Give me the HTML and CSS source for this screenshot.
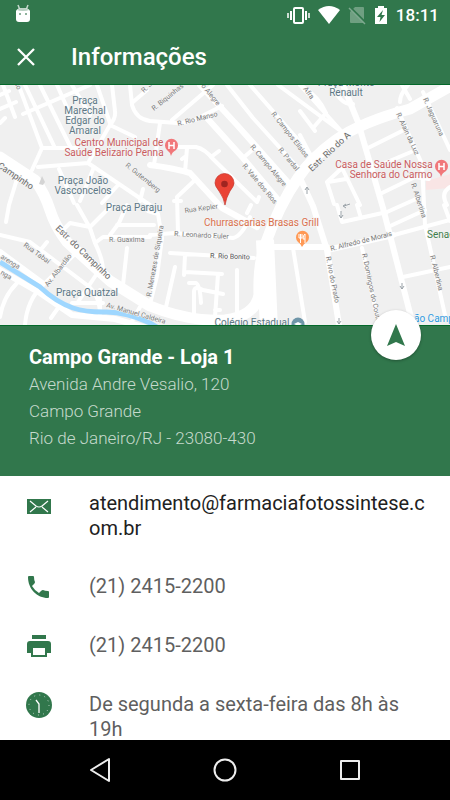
FILE: index.html
```html
<!DOCTYPE html>
<html lang="pt-BR">
  <head>
    <meta charset="UTF-8" />
    <meta name="viewport" content="width=device-width, initial-scale=1" />
    <title>Informações</title>
    <link rel="stylesheet" href="styles.css">
  </head>
  <body>
    <!-- Status bar -->
    <div class="status-bar">
      <svg class="status-robot" width="16" height="18" viewBox="0 0 16 18">
        <path d="M3 1l2 5M13 1l-2 5" stroke="#c5d8cc" stroke-width="1.5" />
        <path d="M1 7q1-3 7-3t7 3v8q0 3-3 3H4q-3 0-3-3z" fill="#fff" />
        <path d="M2 6q2-2 6-2t6 2q-2 1-6 1T2 6z" fill="#b9d0c2" />
        <path d="M4 9h2v2H4zM10 9h2v2h-2z" fill="#8fb39d" />
      </svg>
      <div class="status-icons">
        <svg width="24" height="20" viewBox="0 0 24 20" fill="none" stroke="#fff">
          <rect x="8" y="3" width="9" height="15" rx="1" stroke-width="2" />
          <path d="M5 6v9M20 6v9" stroke-width="2" />
          <path d="M2 8v5M23 8v5" stroke-width="1.5" />
        </svg>
        <svg width="22" height="20" viewBox="0 0 22 20">
          <path d="M0 5Q11-3 22 5L11 19z" fill="#fff" />
        </svg>
        <svg width="18" height="20" viewBox="0 0 18 20">
          <path d="M2 7l5-5h8q1 0 1 1v14q0 1-1 1H3q-1 0-1-1z" fill="#6f9f81" />
          <path d="M2 2l16 16" stroke="#31774c" stroke-width="2" />
          <path d="M1 3l16 16" stroke="#7fa98f" stroke-width="1.5" />
        </svg>
        <svg width="14" height="20" viewBox="0 0 14 20">
          <path d="M4 1h6v2h3v16H1V3h3z" fill="#fff" />
          <path d="M9 5l-6 7h3.5l-1 5L11 10H7.500z" fill="#31774c" />
        </svg>
        <span class="clock">18:11</span>
      </div>
    </div>

    <header class="toolbar">
      <button class="close" aria-label="Fechar">
        <svg width="18" height="18" viewBox="0 0 18 18">
          <path d="M1 1l16 16M17 1L1 17" stroke="#fff" stroke-width="2.3" />
        </svg>
      </button>
      <h1>Informações</h1>
    </header>

    <!-- Map -->
    <svg class="map" viewBox="0 0 450 240" preserveAspectRatio="xMidYMid slice" role="img" aria-label="Mapa da loja">
      <rect width="450" height="240" fill="#f0f0f0" />
      <path d="M426 96l24-7v14l-24 2z" fill="#f9e5e5" />

      <g class="roads">
        <path d="M23 29L90 0M3 0l12 32M0 24l16-7M0 10l9-4M0 38l5-5M20 4l22 59M25 0l30 63M40 0l31 63M57 0l15 34M72 0l18 30" />
        <path d="M42 63h35M42 63L32 85M38 82l50-4 62 42M88 78l22-38q6-7 5-14L112 0M97 0l13 38M110 40l25 12M130 0l2 20q4 14 18 16l27 2q17 0 27-8l18-9M133 17l14-12" />
        <path d="M59 84l15 34M102 118l16-18M140 116l3-12M80 116l14-34M17 94l-8 26-3 17" />
        <path d="M172 35L213 0M227 0l26 33 47 52M250 0l50 57 14 17M278 0l64 47M300 0l42 47M243 73l14-12M160 38l-6 42M187 63l-2 24M182 74l4-3" />
        <path d="M175 62h21q9 2 17 12l44 43 2-5M211 72l8-6M195 95l-18 17 1 35M174 116h7" />
        <path d="M313 43l13-15M300 26l15 20M300 50l12 23M300 0q18 10 26 28M353 19q-12 2-21-19M400 17q0-8 8-17M410 14l-8-14" />
        <path d="M397 23l25 56 3 61 20 90M423 7l27 58M368 63l36-18M373 83l38-16M382 108l33-16 14 2M360 37l8 0M327 97l15-14 18 37M327 97l7 22M328 97l18-3M450 102q-10 6-3 18" />
        <path d="M337 120l5 17 45-10 29-13M357 120l4 13M362 163l16 72M403 192l47-10M388 142l37-17M394 150l56-15M444 120l6 16" />
        <path d="M0 150l30 7 57 43q13 10 13 30M47 157l-8 10M77 167L43 200q-16 15-18 40M17 198Q3 212 0 232M96 190l-18 27M64 144l6-6 20 4 22-22M77 120l13 23 5 15q8 16 8 28M95 158l8-6h47M110 150l9-12 8-18M117 140h37M127 163l-4 37M72 218h31M58 223l-7 10M100 205v25M140 222l-9 16" />
        <path d="M150 150l24-2 59 5q9-2 17-21M148 126l10 3 4 24-5 38-6 24M170 168l84 5M185 170l-1 20M185 187l37 2M218 189l-3 43M175 182l-9 40M189 198h7q4 2 5 20M194 235V207q0-7 9-2l20 4M237 185v46M247 128l4-8M293 163l12 74M215 225h5" />
      </g>
      <g class="roads roads-wide">
        <path d="M0 167l42 31M0 185l40 23 32 22 43 4 35 10" />
        <path d="M207 33l36 40 37 44M200 0l37 40 56 63M150 80q23 3 40 8l32 35 35 19" />
        <path d="M343 0l15 37 25 86 30 117M300 93l13 28 14 44 12 75M327 165l66-15M263 162h64" />
      </g>
      <path class="river" d="M0 177l40 25q16 15 33 21 12 4 30 4 22-1 47 11l10 6" />
      <g class="roads roads-main">
        <path d="M0 72l35 23q10 14 15 30t17 32l43 39 40 25q40 16 75 14 30-4 34-25-1-30 6-50 14-40 33-67 13-20 38-38 25-18 74-31l55-31" />
      </g>
      <path class="avenue" d="M265 155l4 90" />
      <path d="M39 99l3-8 3 6-2 3z" fill="#d4d4d4" />

      <g class="street">
        <text transform="translate(154 26) rotate(-39)">R. Biquinhas</text>
        <text transform="translate(178 41) rotate(-14)">R. Rio Manso</text>
        <text transform="translate(201 1) rotate(51)">o Alegre</text>
        <text transform="translate(271 29) rotate(52)">R. Campos Elísios</text>
        <text transform="translate(278 65) rotate(50)">R. Pardal</text>
        <text transform="translate(250 62) rotate(50)">R. Campo Alegre</text>
        <text transform="translate(242 81) rotate(50)">R. Vale dos Rios</text>
        <text transform="translate(125 81) rotate(39)">R. Gutemberg</text>
        <text transform="translate(185 128) rotate(-8)">Rua Kepler</text>
        <text x="109" y="157">R. Guaxima</text>
        <text transform="translate(174 151) rotate(3)">R. Leonardo Euler</text>
        <text class="dark" transform="translate(210 173) rotate(2)">R. Rio Bonito</text>
        <text transform="translate(23 161) rotate(36)">Rua Tabaí</text>
        <text transform="translate(48 202) rotate(-52)">Av. Albardão</text>
        <text transform="translate(151 212) rotate(-80)">R. Menezes de Siqueira</text>
        <text transform="translate(106 222) rotate(16)">Av. Manuel Caldeira</text>
        <text transform="translate(0 173) rotate(32)">arenga</text>
        <text transform="translate(0 189) rotate(30)">nga</text>
        <text transform="translate(331 166) rotate(-14)">R. Alfredo de Morais</text>
        <text transform="translate(326 172) rotate(79)">R. Ivo do Prado</text>
        <text transform="translate(362 169) rotate(78)">R. Domingos do Couto</text>
        <text transform="translate(430 171) rotate(76)">R. Albertina</text>
        <text transform="translate(411 99) rotate(72)">R. Albertina</text>
        <text transform="translate(396 29) rotate(65)">R. Alain da Luz</text>
        <text transform="translate(423 14) rotate(66)">R. Jaguaruna</text>
        <text transform="translate(144 8) rotate(-45)">R. S</text>
        <text transform="translate(303 4) rotate(53)">Afra</text>
        <text transform="translate(15 0) rotate(65)">lo</text>
      </g>
      <g class="road-name">
        <text transform="translate(-3 82) rotate(34)">Campinho</text>
        <text transform="translate(55 144) rotate(44)">Estr. do Campinho</text>
        <text transform="translate(312 87) rotate(-43)">Estr. Rio do A</text>
      </g>
      <g class="place">
        <text x="85" y="19">Praça</text>
        <text x="85" y="29">Marechal</text>
        <text x="85" y="39">Edgar do</text>
        <text x="85" y="49">Amaral</text>
        <text x="83" y="99">Praça João</text>
        <text x="83" y="109">Vasconcelos</text>
        <text x="134" y="126">Praça Paraju</text>
        <text x="87" y="211">Praça Quatzal</text>
        <text x="346" y="1">Praça Monte</text>
        <text x="346" y="11">Renault</text>
        <text x="252" y="241">Colégio Estadual</text>
      </g>
      <g class="place health">
        <text x="119" y="61">Centro Municipal de</text>
        <text x="114" y="71">Saúde Belizario Penna</text>
        <text x="384" y="83">Casa de Saúde Nossa</text>
        <text x="391" y="93">Senhora do Carmo</text>
      </g>
      <text class="food" x="204" y="141">Churrascarias Brasas Grill</text>
      <text class="school" x="427" y="153">Senac</text>
      <text class="station" x="414" y="237">ão Campo</text>

      <!-- Points of interest -->
      <g id="hospital">
        <path d="M171 71q-1-4-4-6a6.500 6.500 0 1 1 9 0q-4 2-5 6z" fill="#f1777a" />
        <path d="M169 57v7M174 57v7M169 60.500h5" stroke="#fff" stroke-width="1.500" />
      </g>
      <use href="#hospital" x="270" y="21" />
      <path d="M302 162q-1-3-4-5a6.500 6.500 0 1 1 9 0q-4 2-5 5z" fill="#ff9955" />
      <path d="M299 149v4h3v-4M300.500 149v9M305 158v-9q-2 1-2 5h2" fill="none" stroke="#fff" />
      <circle cx="298" cy="239" r="6.500" fill="#6e95a8" />
      <path d="M294 239l4-2 4 2-4 2z" fill="#fff" />
      <g fill="none" stroke="#9aa2a8">
        <path d="M307 109v-6M305 105l2-3 2 3M341 126v7M339 130l2 3 2-3M402 198v6M400 201l2 3 2-3M339 233v6M337 236l2 3 2-3M350 119l-6 2M346 119l-3 2 3 2" />
      </g>

      <!-- Store marker -->
      <path d="M225 120q-1-7-6-14-4-5-4-8a9.500 9.500 0 0 1 19 0q0 3-4 8-4 7-5 14z" fill="#ea4335" stroke="#c5352b" stroke-width=".7" />
      <circle cx="224.500" cy="99" r="3.300" fill="#a02520" />
    </svg>

    <section class="store">
      <button class="directions" aria-label="Como chegar">
        <svg width="20" height="24" viewBox="0 0 20 24">
          <path d="M10 1l9 22-9-4-9 4z" fill="#31774c" />
        </svg>
      </button>
      <h2>Campo Grande - Loja 1</h2>
      <address>
        Avenida Andre Vesalio, 120<br>
        Campo Grande<br>
        Rio de Janeiro/RJ - 23080-430
      </address>
    </section>

    <ul class="contacts">
      <li>
        <svg width="26" height="26" viewBox="0 0 26 26">
          <rect x="1" y="8" width="24" height="15" fill="#31774c" />
          <path d="M4 10l6 5q3 2 6 0l6-5M4 21l6-5M22 21l-6-5" fill="none" stroke="#fff" stroke-width="1.2" />
        </svg>
        <a class="email" href="mailto:atendimento@farmaciafotossintese.com.br">atendimento@farmaciafotossintese.com.br</a>
      </li>
      <li>
        <svg width="26" height="26" viewBox="0 0 26 26">
          <path d="M3 2h4q1 0 1 1 0 3 1 5 0 1-1 2l-2 2q3 5 7 7l2-2q1-1 2-1 2 1 5 1 1 0 1 1v5q0 1-1 1C11 24 2 15 2 3q0-1 1-1z" fill="#31774c" />
        </svg>
        <a href="tel:+552124152200">(21) 2415-2200</a>
      </li>
      <li>
        <svg width="26" height="26" viewBox="0 0 26 26">
          <path d="M6 2h14v4H6zM4 8h18q3 0 3 3v9h-4v4H5v-4H1v-9q0-3 3-3z" fill="#31774c" />
          <path d="M7 15h12v7H7z" fill="#fff" />
        </svg>
        <a href="tel:+552124152200">(21) 2415-2200</a>
      </li>
      <li>
        <svg width="26" height="26" viewBox="0 0 26 26">
          <circle cx="13" cy="13" r="13" fill="#31774c" />
          <circle cx="13" cy="13" r="10" fill="none" stroke="#c5d8cc" stroke-dasharray="1 4.236" />
          <path d="M10 8l3 4v9" fill="none" stroke="#fff" stroke-width="1.3" />
        </svg>
        <span>De segunda a sexta-feira das 8h às 19h</span>
      </li>
    </ul>

    <!-- System navigation -->
    <nav class="nav-bar">
      <button aria-label="Voltar">
        <svg width="24" height="26" viewBox="0 0 24 26"><path d="M21 2v22L3 13z" /></svg>
      </button>
      <button aria-label="Início">
        <svg width="24" height="26" viewBox="0 0 24 26"><circle cx="12" cy="13" r="10.500" /></svg>
      </button>
      <button aria-label="Recentes">
        <svg width="24" height="26" viewBox="0 0 24 26"><rect x="3" y="4" width="18" height="18" /></svg>
      </button>
    </nav>
  </body>
</html>
```

FILE: styles.css
```css
* {
  box-sizing: border-box;
}
body {
  margin: 0;
  height: 100vh;
  display: flex;
  flex-direction: column;
  font-family: Roboto, "Liberation Sans", sans-serif;
  background-color: #fff;
  overflow: hidden;
}
svg {
  display: block;
  flex: none;
}
button {
  display: flex;
  align-items: center;
  justify-content: center;
  padding: 0;
  border: none;
  background: none;
  cursor: pointer;
}

/* Top bars */
.status-bar {
  display: flex;
  flex: none;
  justify-content: space-between;
  align-items: center;
  height: 30px;
  padding: 0 11px 0 15px;
  background-color: #31774c;
}
.status-robot {
  margin-bottom: 4px;
}
.status-icons {
  display: flex;
  align-items: center;
  gap: 8px;
}
.clock {
  color: #fff;
  font-size: 17px;
  font-weight: 500;
  line-height: 30px;
}
.toolbar {
  display: flex;
  flex: none;
  align-items: center;
  gap: 28px;
  height: 55px;
  padding-left: 9px;
  background-color: #31774c;
  border-bottom: 1px solid #04682a;
}
.close {
  width: 34px;
  height: 34px;
}
h1 {
  margin: 0;
  color: #fff;
  font-size: 24px;
  font-weight: 500;
}

/* Map */
.map {
  width: 100%;
  height: 240px;
}
.roads {
  fill: none;
  stroke: #fff;
  stroke-width: 4;
  stroke-linecap: round;
  stroke-linejoin: round;
}
.roads-wide {
  stroke-width: 6;
}
.roads-main {
  stroke-width: 11;
}
.avenue {
  stroke: #fff;
  stroke-width: 18;
}
.river {
  fill: none;
  stroke: #9fd7ff;
  stroke-width: 5;
}
.map text {
  paint-order: stroke;
  stroke: #f6f6f6;
  stroke-width: 1px;
}
.street {
  fill: #7b7b7b;
  font-size: 7px;
}
.street .dark {
  fill: #555;
}
.road-name {
  fill: #686868;
  font-size: 9px;
}
.place {
  fill: #5d7886;
  font-size: 10px;
  text-anchor: middle;
}
.health {
  fill: #c95c60;
}
.food {
  fill: #d9704c;
  font-size: 10px;
}
.school {
  fill: #3e7d4a;
  font-size: 10px;
}
.station {
  fill: #2f9be0;
  font-size: 10px;
}

/* Store */
.store {
  position: relative;
  flex: none;
  padding: 18px 29px 24px;
  color: #fff;
  background-color: #31774c;
  border-top: 1px solid #04682a;
}
.store h2 {
  margin: 0;
  font-size: 20px;
  font-weight: 700;
  line-height: 27px;
}
.store address {
  color: #c6dacd;
  font-size: 17px;
  font-style: normal;
  font-weight: 300;
  line-height: 27px;
}
.directions {
  position: absolute;
  top: -16px;
  right: 29px;
  width: 50px;
  height: 50px;
  border-radius: 50%;
  background-color: #fff;
  box-shadow: 0 1px 3px rgba(0, 0, 0, 0.3);
}

/* Contacts */
.contacts {
  flex: 1;
  min-height: 0;
  margin: 0;
  padding: 0 24px 0 26px;
  list-style: none;
  overflow: hidden;
}
.contacts li {
  display: flex;
  gap: 37px;
  padding: 15px 0 18px;
  color: #5f5f5f;
  font-size: 20px;
  line-height: 25px;
}
.contacts a {
  color: inherit;
  text-decoration: none;
}
.contacts .email {
  min-width: 0;
  color: #212121;
  word-break: break-all;
}

/* System navigation */
.nav-bar {
  display: flex;
  flex: none;
  justify-content: space-between;
  align-items: center;
  height: 60px;
  padding: 0 76px;
  background-color: #000;
}
.nav-bar button {
  width: 48px;
  height: 48px;
}
.nav-bar svg {
  fill: none;
  stroke: #eee;
  stroke-width: 2;
  stroke-linejoin: round;
}
```
